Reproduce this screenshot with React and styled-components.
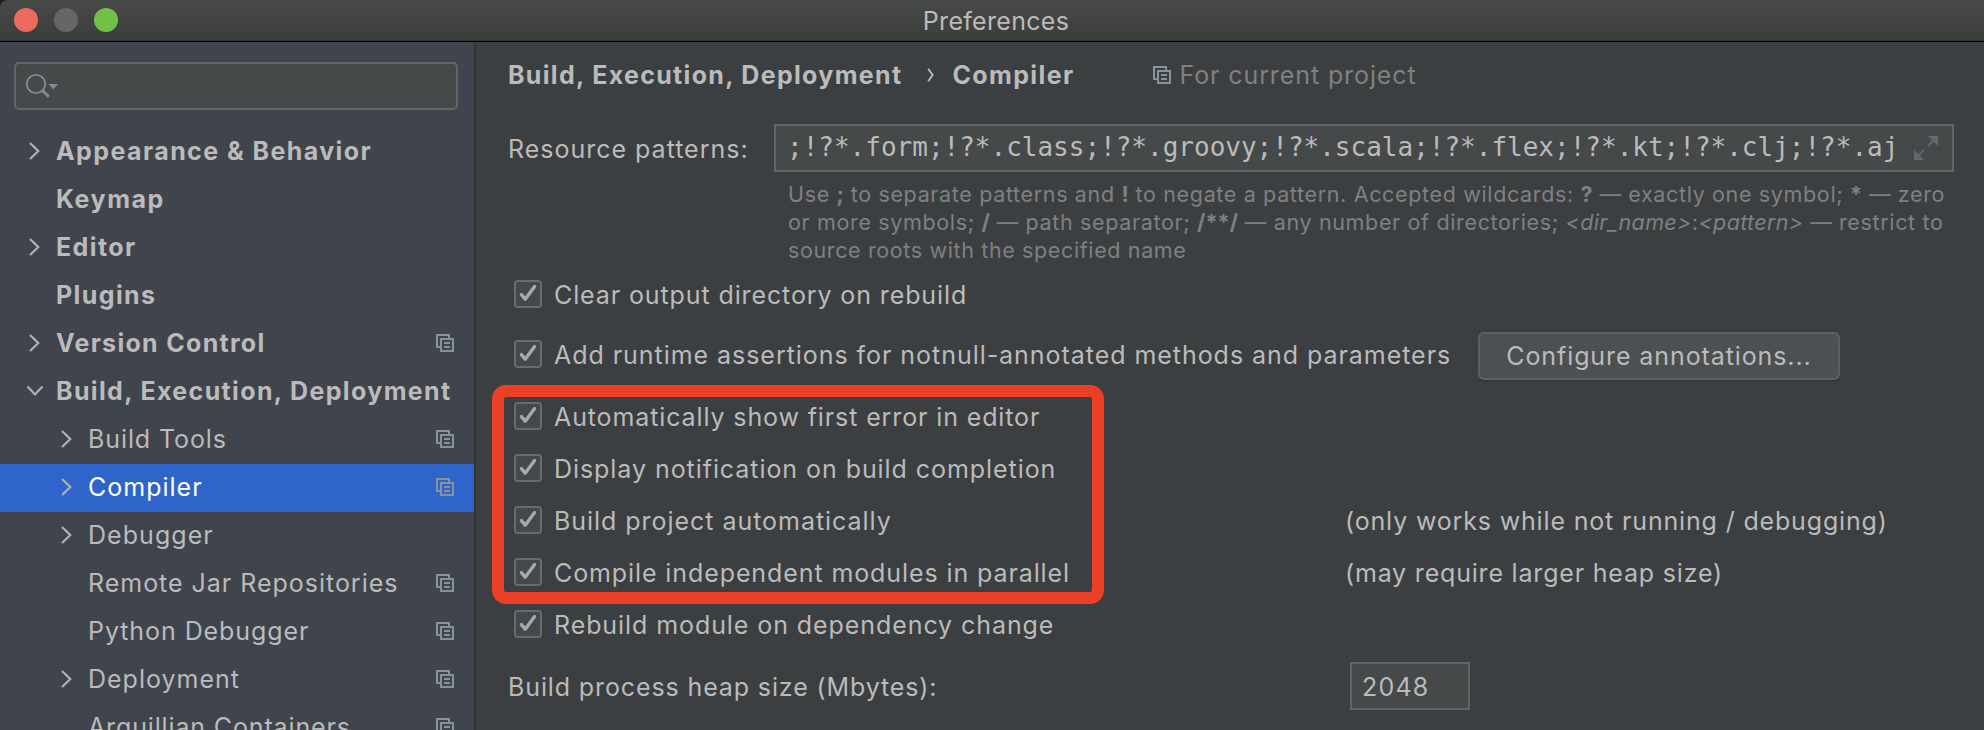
import React from 'react';
import styled, { createGlobalStyle } from 'styled-components';

const GlobalStyle = createGlobalStyle`
  *, *::before, *::after { box-sizing: border-box; }
  html, body { margin: 0; padding: 0; background: #3c3f41; }
  body { overflow: hidden; }
`;

const Window = styled.div`
  display: flex;
  flex-direction: column;
  width: 1984px;
  height: 730px;
  overflow: hidden;
  background: #1e1f1f;
  color: #bbbbbb;
  font-family: Inter, "Liberation Sans", sans-serif;
  font-size: 25px;
  line-height: 48px;
  white-space: nowrap;
`;

const TitleBar = styled.header`
  display: grid;
  grid-template-columns: 1fr auto 1fr;
  flex: none;
  height: 42px;
  padding: 0 6px 0 14px;
  background: linear-gradient(#484a48, #3b3d3b);
  border-bottom: 1px solid #000000;
  border-top-left-radius: 8px;
  box-shadow: inset 0 -1px 0 #323432;
`;

const TrafficLights = styled.div`
  display: flex;
  gap: 16px;
  padding-top: 8px;
`;

const Light = styled.span`
  width: 24px;
  height: 24px;
  border-radius: 50%;
  background: ${(p) => p.$color};
`;

const Title = styled.h1`
  margin: 0;
  font-size: 25px;
  font-weight: 400;
  line-height: 42px;
  letter-spacing: 0.3px;
`;

const Body = styled.div`
  display: flex;
  flex: 1;
  min-height: 0;
`;

const Sidebar = styled.nav`
  flex: none;
  width: 476px;
  padding-top: 20px;
  overflow: hidden;
  background: #40444d;
  border-right: 2px solid #333436;
`;

const SearchBox = styled.div`
  width: 444px;
  height: 48px;
  margin: 0 0 18px 14px;
  padding: 8px 0 0 8px;
  background: #45494a;
  border: 2px solid #646464;
  border-radius: 5px;
  line-height: 0;
`;

const TreeRow = styled.div`
  display: flex;
  align-items: center;
  height: 48px;
  padding: 0 20px 2px ${(p) => (p.$child ? 56 : 24)}px;
  background: ${(p) => (p.$selected ? '#2f65ca' : 'transparent')};
  color: ${(p) => (p.$selected ? '#ffffff' : '#bbbbbb')};
  font-weight: ${(p) => (p.$child ? 400 : 700)};
`;

const ArrowSlot = styled.span`
  display: flex;
  flex: none;
  width: 32px;
`;

const TreeLabel = styled.span`
  flex: 1;
  line-height: 46px;
  letter-spacing: ${(p) => p.$spacing}px;
`;

const Content = styled.main`
  display: flex;
  flex-direction: column;
  flex: 1;
  padding: 9px 30px 0 32px;
  background: #3c3f41;
`;

const Breadcrumb = styled.div`
  display: flex;
  align-items: center;
  height: 48px;
`;

const Crumb = styled.span`
  font-weight: 700;
  letter-spacing: ${(p) => p.$spacing}px;
`;

const CrumbArrow = styled.span`
  display: flex;
  width: 50px;
  padding-left: 25px;
`;

const ScopeNote = styled.span`
  display: flex;
  align-items: center;
  gap: 8px;
  margin-left: 79px;
  color: #808080;
  letter-spacing: 0.9px;
`;

const FieldRow = styled.div`
  display: flex;
  height: 48px;
  margin-top: ${(p) => p.$top}px;
`;

const FieldLabel = styled.label`
  width: ${(p) => p.$width}px;
  padding-top: 1px;
  letter-spacing: ${(p) => p.$spacing}px;
`;

const TextField = styled.div`
  display: flex;
  align-items: center;
  justify-content: space-between;
  width: ${(p) => p.$width}px;
  height: 48px;
  padding: 0 14px 0 ${(p) => p.$inset}px;
  background: #45494a;
  border: 2px solid #646464;
`;

const Mono = styled.span`
  font-family: "DejaVu Sans Mono", monospace;
  font-size: 26px;
  line-height: 42px;
  height: 44px;
`;

const Digits = styled.span`
  padding-top: 2px;
  line-height: 46px;
  letter-spacing: 1.2px;
`;

const Hint = styled.div`
  margin: 8px 0 4px 280px;
  color: #808080;
  font-size: 21.5px;
  line-height: 28px;
`;

const HintLine = styled.div`
  letter-spacing: ${(p) => p.$spacing}px;

  b { letter-spacing: 0.1px; }
  i { letter-spacing: 0.35px; }
`;

const OptionRow = styled.div`
  display: flex;
  align-items: center;
  height: ${(p) => (p.$tall ? 68 : 52)}px;
  margin-bottom: ${(p) => (p.$tall ? 2 : 0)}px;
  padding-left: 6px;
`;

const CheckBox = styled.span`
  display: flex;
  flex: none;
  width: 28px;
  height: 28px;
  background: #43494a;
  border: 2px solid #6b6b6b;
  border-radius: 4px;
`;

const OptionLabel = styled.span`
  width: ${(p) => (p.$tall ? 936 : 803)}px;
  padding: 2px 0 0 12px;
  letter-spacing: ${(p) => p.$spacing}px;
`;

const OptionNote = styled.span`
  padding-top: 2px;
  letter-spacing: ${(p) => p.$spacing}px;
`;

const Button = styled.button`
  width: 362px;
  height: 48px;
  margin: 4px 0 0;
  padding: 1px 0 0;
  background: #4c5052;
  border: 2px solid #5e6060;
  border-radius: 6px;
  box-shadow: 0 2px 0 #36383a;
  color: #bbbbbb;
  font: inherit;
  line-height: 43px;
  letter-spacing: 0.9px;
`;

const HighlightedGroup = styled.div`
  position: relative;
`;

const HighlightFrame = styled.div`
  position: absolute;
  top: -5px;
  left: -16px;
  width: 612px;
  height: 219px;
  border: 12px solid #eb4026;
  border-radius: 14px;
`;

const Svg = styled.svg`
  display: block;
  flex: none;
`;

function CopyIcon() {
  return (
    <Svg width="18" height="18" viewBox="0 0 18 18" fill="none" stroke="#87939a" strokeWidth="2">
      <path d="M13 4V1H1V13H4" />
      <path d="M5 5H17V17H5Z" />
      <path d="M8 9H14M8 13H14" />
    </Svg>
  );
}

function Arrow({ open }) {
  return (
    <Svg width="20" height="20" viewBox="0 0 20 20" fill="none" stroke="#afb1b3" strokeWidth="2.2">
      <path d={open ? 'M3.5 5.5L11 13.5L18.5 5.5' : 'M6 2L14.3 10L6 18'} />
    </Svg>
  );
}

function SearchIcon() {
  return (
    <Svg width="36" height="28" viewBox="0 0 36 28" fill="none" stroke="#7f8b91">
      <circle cx="12" cy="12" r="9.2" strokeWidth="1.8" />
      <path d="M18.5 18.5L24.8 24.8" strokeWidth="3" />
      <path d="M24.5 12H34L29.2 17.6Z" fill="#7f8b91" stroke="none" />
    </Svg>
  );
}

function ExpandIcon() {
  return (
    <Svg width="24" height="24" viewBox="0 0 24 24" fill="#62696c">
      <path d="M14 0H24V10Z" />
      <path d="M0 14V24H10Z" />
      <path d="M14 10L20 4M10 14L4 20" stroke="#62696c" strokeWidth="2" />
    </Svg>
  );
}

function CheckMark() {
  return (
    <Svg width="24" height="24" viewBox="0 0 24 24" fill="none" stroke="#a9a9a9" strokeWidth="3.4">
      <path d="M5.4 12.6L9.2 17.2L18.6 4.6" strokeLinecap="round" strokeLinejoin="round" />
    </Svg>
  );
}

const TREE = [
  { label: 'Appearance & Behavior', arrow: 'closed', spacing: 1.42 },
  { label: 'Keymap', spacing: 1.55 },
  { label: 'Editor', arrow: 'closed', spacing: 1.4 },
  { label: 'Plugins', spacing: 1.4 },
  { label: 'Version Control', arrow: 'closed', scoped: true, spacing: 1.3 },
  { label: 'Build, Execution, Deployment', arrow: 'open', spacing: 1.36 },
  { label: 'Build Tools', child: true, arrow: 'closed', scoped: true, spacing: 0.9 },
  { label: 'Compiler', child: true, arrow: 'closed', scoped: true, selected: true, spacing: 1.0 },
  { label: 'Debugger', child: true, arrow: 'closed', spacing: 1.05 },
  { label: 'Remote Jar Repositories', child: true, scoped: true, spacing: 0.98 },
  { label: 'Python Debugger', child: true, scoped: true, spacing: 0.93 },
  { label: 'Deployment', child: true, arrow: 'closed', scoped: true, spacing: 1.0 },
  { label: 'Arquillian Containers', child: true, scoped: true, spacing: 0.86 },
];

const GROUPED_OPTIONS = [
  { label: 'Automatically show first error in editor', spacing: 0.88 },
  { label: 'Display notification on build completion', spacing: 0.94 },
  {
    label: 'Build project automatically',
    spacing: 0.96,
    note: '(only works while not running / debugging)',
    noteSpacing: 0.84,
  },
  {
    label: 'Compile independent modules in parallel',
    spacing: 0.9,
    note: '(may require larger heap size)',
    noteSpacing: 0.81,
  },
];

function Option({ label, spacing, note, noteSpacing, tall, children }) {
  return (
    <OptionRow $tall={tall}>
      <CheckBox>
        <CheckMark />
      </CheckBox>
      <OptionLabel $tall={tall} $spacing={spacing}>{label}</OptionLabel>
      {note && <OptionNote $spacing={noteSpacing}>{note}</OptionNote>}
      {children}
    </OptionRow>
  );
}

export default function App() {
  return (
    <Window>
      <GlobalStyle />
      <TitleBar>
        <TrafficLights>
          <Light $color="#ed6a5e" />
          <Light $color="#656766" />
          <Light $color="#72c048" />
        </TrafficLights>
        <Title>Preferences</Title>
      </TitleBar>
      <Body>
        <Sidebar>
          <SearchBox>
            <SearchIcon />
          </SearchBox>
          {TREE.map((item) => (
            <TreeRow key={item.label} $child={item.child} $selected={item.selected}>
              <ArrowSlot>{item.arrow && <Arrow open={item.arrow === 'open'} />}</ArrowSlot>
              <TreeLabel $spacing={item.spacing}>{item.label}</TreeLabel>
              {item.scoped && <CopyIcon />}
            </TreeRow>
          ))}
        </Sidebar>
        <Content>
          <Breadcrumb>
            <Crumb $spacing={1.32}>Build, Execution, Deployment</Crumb>
            <CrumbArrow>
              <Svg width="8" height="14" viewBox="0 0 8 14" fill="none" stroke="#bbbbbb" strokeWidth="1.9">
                <path d="M1.2 0.8L5.6 7L1.2 13.2" />
              </Svg>
            </CrumbArrow>
            <Crumb $spacing={1.38}>Compiler</Crumb>
            <ScopeNote>
              <CopyIcon />
              For current project
            </ScopeNote>
          </Breadcrumb>
          <FieldRow $top={25}>
            <FieldLabel $width={266} $spacing={0.99}>Resource patterns:</FieldLabel>
            <TextField $width={1180} $inset={11}>
              <Mono>;!?*.form;!?*.class;!?*.groovy;!?*.scala;!?*.flex;!?*.kt;!?*.clj;!?*.aj</Mono>
              <ExpandIcon />
            </TextField>
          </FieldRow>
          <Hint>
            <HintLine $spacing={0.65}>
              Use <b>;</b> to separate patterns and <b>!</b> to negate a pattern. Accepted wildcards: <b>?</b> — exactly one symbol; <b>*</b> — zero
            </HintLine>
            <HintLine $spacing={0.65}>
              or more symbols; <b>/</b> — path separator; <b>/**/</b> — any number of directories; <i>&lt;dir_name&gt;</i>:<i>&lt;pattern&gt;</i> — restrict to
            </HintLine>
            <HintLine $spacing={0.63}>source roots with the specified name</HintLine>
          </Hint>
          <Option label="Clear output directory on rebuild" spacing={0.89} />
          <Option
            label="Add runtime assertions for notnull-annotated methods and parameters"
            spacing={0.955}
            tall
          >
            <Button>Configure annotations...</Button>
          </Option>
          <HighlightedGroup>
            {GROUPED_OPTIONS.map((option) => (
              <Option key={option.label} {...option} />
            ))}
            <HighlightFrame />
          </HighlightedGroup>
          <Option label="Rebuild module on dependency change" spacing={0.92} />
          <FieldRow $top={12}>
            <FieldLabel $width={842} $spacing={0.88}>Build process heap size (Mbytes):</FieldLabel>
            <TextField $width={120} $inset={10}>
              <Digits>2048</Digits>
            </TextField>
          </FieldRow>
        </Content>
      </Body>
    </Window>
  );
}
